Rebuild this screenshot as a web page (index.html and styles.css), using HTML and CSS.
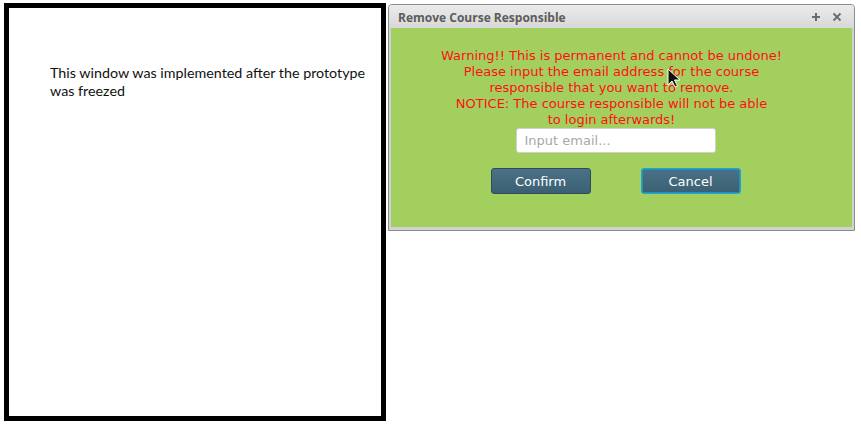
FILE: index.html
```html
<!DOCTYPE html>
<html>
<head>
<meta charset="utf-8">
<link rel="stylesheet" href="styles.css">
</head>
<body>
<div class="page">
  <div class="note-box">
    <p class="note-text">This window was implemented after the prototype was freezed</p>
  </div>
  <div class="dialog">
    <div class="titlebar">
      <span class="title">Remove Course Responsible</span>
      <span class="controls">
        <svg class="ctl" width="10" height="10" viewBox="0 0 10 10"><path d="M5 1v8M1 5h8" stroke="#6a6a6a" stroke-width="2"/></svg>
        <svg class="ctl" width="10" height="10" viewBox="0 0 10 10"><path d="M1.5 1.5l7 7M8.5 1.5l-7 7" stroke="#6a6a6a" stroke-width="1.8"/></svg>
      </span>
    </div>
    <div class="body">
      <p class="warning">Warning!! This is permanent and cannot be undone!<br>Please input the email address for the course<br>responsible that you want to remove.<br>NOTICE: The course responsible will not be able<br>to login afterwards!</p>
      <div class="input">Input email...</div>
      <div class="buttons">
        <div class="btn">Confirm</div>
        <div class="btn focused">Cancel</div>
      </div>
      <svg class="cursor" width="13" height="20" viewBox="0 0 13 20"><path d="M1 1v16l4-4 3 6 2.5-1-3-6h5.5z" fill="#111" stroke="#fff" stroke-width="1"/></svg>
    </div>
  </div>
</div>
</body>
</html>
```
FILE: styles.css
```css
html, body {
  margin: 0;
  padding: 0;
  background: #ffffff;
}
.page {
  display: flex;
  align-items: flex-start;
  width: 861px;
  height: 432px;
}
.note-box {
  box-sizing: border-box;
  width: 382px;
  height: 418px;
  margin: 3px 0 0 4px;
  border: 5px solid #000;
  background: #fff;
  padding: 56px 14px 0 41px;
}
.note-text {
  margin: 0;
  font-family: Lato, "Open Sans", sans-serif;
  font-size: 14.3px;
  line-height: 18px;
  color: #111;
}
.dialog {
  box-sizing: border-box;
  width: 467px;
  height: 227px;
  margin: 4px 0 0 2px;
  border: 1px solid #8c8c8c;
  border-radius: 4px 4px 0 0;
  background: #d2d2d2;
  display: flex;
  flex-direction: column;
}
.titlebar {
  height: 23px;
  flex: none;
  display: flex;
  align-items: center;
  justify-content: space-between;
  padding: 1px 12px 0 9px;
  box-sizing: border-box;
  border-radius: 3px 3px 0 0;
  background: linear-gradient(#ebebeb, #d8d8d8);
}
.title {
  font-family: "Open Sans", sans-serif;
  font-weight: bold;
  font-size: 12px;
  color: #5c5c5c;
}
.controls {
  display: flex;
  gap: 11px;
  align-items: center;
}
.ctl {
  display: block;
}
.body {
  position: relative;
  flex: 1;
  margin: 0 2px 3px 2px;
  background: #a3cf5f;
  display: flex;
  flex-direction: column;
  align-items: center;
  padding: 20px 20px 0 0;
}
.warning {
  margin: 0;
  text-align: center;
  font-family: "DejaVu Sans", sans-serif;
  font-size: 13px;
  line-height: 16px;
  color: #ff1010;
}
.input {
  box-sizing: border-box;
  width: 200px;
  height: 25px;
  margin-top: 0;
  margin-left: 8px;
  background: #fff;
  border: 1px solid #d0d0d0;
  border-radius: 3px;
  padding: 0 8px;
  font-family: "DejaVu Sans", sans-serif;
  font-size: 13px;
  line-height: 23px;
  color: #a8a8a8;
}
.buttons {
  display: flex;
  gap: 50px;
  margin-top: 15px;
  margin-left: 8px;
}
.btn {
  box-sizing: border-box;
  width: 100px;
  height: 26px;
  border: 1px solid #2e4c5c;
  border-radius: 3px;
  background: linear-gradient(#4a7186, #3b6074);
  color: #fff;
  font-family: "DejaVu Sans", sans-serif;
  font-size: 13px;
  line-height: 25px;
  text-align: center;
}
.btn.focused {
  border: 1px solid #1aa6d9;
  box-shadow: inset 0 0 0 1px #2b8fb5;
}
.cursor {
  position: absolute;
  left: 276px;
  top: 40px;
}
```
